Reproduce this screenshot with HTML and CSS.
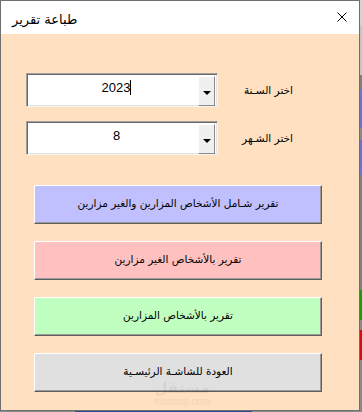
FILE: index.html
```html
<!DOCTYPE HTML><html>
<head>
  <title>طباعة تقرير</title>
  <meta name="viewport" content="width=device-width, initial-scale=1">
  <meta charset="UTF-8">
  <link rel="stylesheet" href="styles.css">
</head>
<body>
  <div class="screen">
    <div class="dialog">
      <div class="titlebar">
        <span class="title">طباعة تقرير</span>
        <svg class="close" width="10" height="10" viewBox="0 0 10 10">
          <path d="M0.5 0.5 L9.5 9.5 M9.5 0.5 L0.5 9.5" stroke="#000" stroke-width="1" fill="none"/>
        </svg>
      </div>
      <div class="content">
        <div class="row">
          <div class="combo">
            <div class="value">2023<span class="caret"></span></div>
            <div class="drop"><span class="arrow"></span></div>
          </div>
          <label class="label">اختر السـنة</label>
        </div>
        <div class="row">
          <div class="combo">
            <div class="value">8</div>
            <div class="drop"><span class="arrow"></span></div>
          </div>
          <label class="label">اختر الشـهر</label>
        </div>
        <div class="buttons">
          <button class="button blue">تقرير شـامل الأشخاص المزارين والغير مزارين</button>
          <button class="button pink">تقرير بالأشخاص الغير مزارين</button>
          <button class="button green">تقرير بالأشخاص المزارين</button>
          <button class="button grey">العودة للشاشـة الرئيسـية</button>
        </div>
        <div class="watermark">
          <span class="wm-ar">مستقل</span>
          <span class="wm-en">mostaql.com</span>
        </div>
      </div>
    </div>
    <div class="strip">
      <div class="seg s1"></div>
      <div class="seg s2"></div>
      <div class="seg s3"></div>
      <div class="seg s4"></div>
      <div class="seg s3b"></div>
      <div class="seg s5"></div>
      <div class="seg s6"></div>
      <div class="seg s7"></div>
      <div class="seg s8"></div>
      <div class="seg s9"></div>
      <div class="seg s10"></div>
    </div>
  </div>
  <div class="under">
    <div class="under-grey"></div>
    <div class="under-blue"></div>
  </div>
</body>
</html>
```

FILE: styles.css
```css
html {
  font-family: "DejaVu Sans", sans-serif;
}
body {
  margin: 0;
  width: 362px;
  height: 412px;
  background-color: #8a8a8a;
  overflow: hidden;
}
.screen {
  display: flex;
  height: 411px;
}
.dialog {
  width: 358px;
  height: 409px;
  border: 1px solid #6f6f6f;
  background-color: #ffe0c1;
  display: flex;
  flex-direction: column;
}
.titlebar {
  height: 33px;
  background-color: #fff;
  display: flex;
  align-items: center;
  justify-content: space-between;
  padding: 0 12px 0 11px;
}
.title {
  font-size: 13px;
  color: #000;
  padding-top: 3px;
}
.close {
  margin-top: -1px;
}
.content {
  position: relative;
  flex: 1;
  padding-top: 39px;
}
.row {
  display: flex;
  align-items: center;
  height: 34px;
  margin-bottom: 14px;
  padding-left: 25px;
}
.combo {
  width: 190px;
  height: 32px;
  background-color: #fff;
  border: 1px solid;
  border-color: #a0a0a0 #f4f4f4 #f4f4f4 #a0a0a0;
  box-shadow: inset 1px 1px #696969, inset -1px -1px #e3e3e3;
  display: flex;
}
.value {
  flex: 1;
  text-align: center;
  font-family: "Liberation Sans", Arial, sans-serif;
  font-size: 13px;
  padding-top: 6px;
  padding-left: 8px;
  color: #000;
}
.caret {
  display: inline-block;
  width: 1px;
  height: 15px;
  background-color: #000;
  vertical-align: -3px;
}
.drop {
  width: 15px;
  height: 28px;
  margin: 2px 2px 2px 0;
  background-color: #f0f0f0;
  border: 1px solid;
  border-color: #fff #8a8a8a #8a8a8a #fff;
  display: flex;
  align-items: center;
  justify-content: center;
}
.arrow {
  width: 0;
  height: 0;
  border-left: 4px solid transparent;
  border-right: 4px solid transparent;
  border-top: 4px solid #000;
  margin-top: 3px;
}
.label {
  flex: 1;
  text-align: right;
  padding-right: 66px;
  font-size: 10.5px;
  color: #000;
}
.buttons {
  display: flex;
  flex-direction: column;
  gap: 17px;
  padding-left: 33px;
  padding-top: 16px;
}
.button {
  width: 288px;
  height: 39px;
  font-family: "DejaVu Sans", sans-serif;
  font-size: 10.5px;
  color: #000;
  border: 1px solid;
  border-color: #fff #5e5e5e #5e5e5e #fff;
  box-shadow: inset -1px -1px #9a9a9a;
  padding: 0 0 4px 0;
  text-align: center;
}
.blue {background-color: #c0c0ff;}
.pink {background-color: #ffc0c0;}
.green {background-color: #c0ffc0;}
.grey {background-color: #e0e0e0;}
.watermark {
  position: absolute;
  left: 150px;
  top: 346px;
  width: 62px;
  display: flex;
  flex-direction: column;
  align-items: center;
  color: #000;
  opacity: 0.05;
  pointer-events: none;
}
.wm-ar {
  font-size: 15px;
  font-weight: bold;
  line-height: 16px;
}
.wm-en {
  font-family: "Liberation Sans", Arial, sans-serif;
  font-size: 10px;
  line-height: 11px;
}
.strip {
  width: 2px;
  display: flex;
  flex-direction: column;
}
.seg {background-color: #808080;}
.s1 {height: 25px; background-color: #d4d4d4;}
.s2 {height: 50px; background-color: #c6c6c6;}
.s3 {height: 15px; background-color: #7f7f7f;}
.s4 {height: 38px; background-color: #7070d0;}
.s3b {height: 12px; background-color: #8a8a8a;}
.s5 {height: 35px; background-color: #7070d0;}
.s6 {height: 115px; background-color: #7f7f7f;}
.s7 {height: 30px; background-color: #10a010;}
.s8 {height: 10px; background-color: #8a8a8a;}
.s9 {height: 30px; background-color: #d01010;}
.s10 {flex: 1; background-color: #8a8a8a;}
.under {
  display: flex;
  height: 1px;
}
.under-grey {
  width: 75px;
  background-color: #8a8a8a;
}
.under-blue {
  width: 177px;
  background-color: #2c4a8c;
}
```
